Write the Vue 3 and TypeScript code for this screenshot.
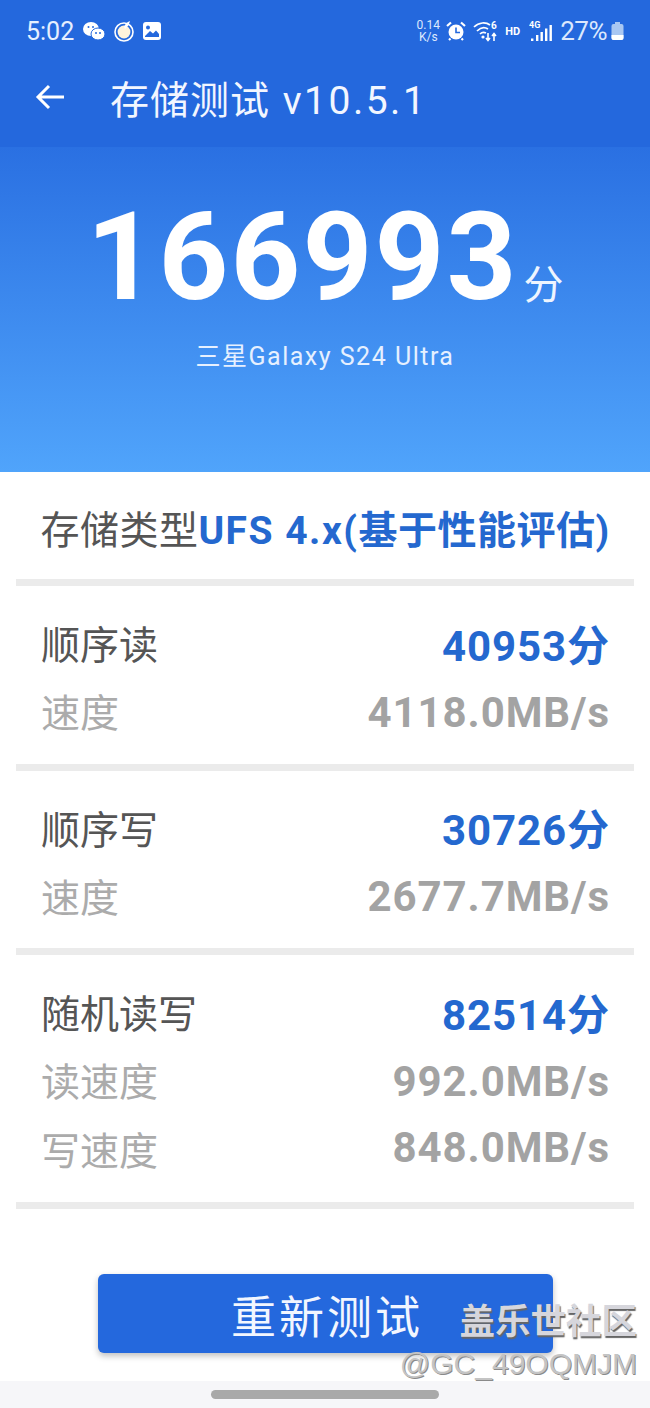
<script setup lang="ts">
interface Line { label: string; value: string; main?: boolean }
const groups: Line[][] = [
  [{ label: '顺序读', value: '40953分', main: true }, { label: '速度', value: '4118.0MB/s' }],
  [{ label: '顺序写', value: '30726分', main: true }, { label: '速度', value: '2677.7MB/s' }],
  [{ label: '随机读写', value: '82514分', main: true }, { label: '读速度', value: '992.0MB/s' }, { label: '写速度', value: '848.0MB/s' }],
]
</script>

<template>
  <div class="page">
    <header class="top">
      <div class="status">
        <div class="status-left">
          <span class="time">5:02</span>
          <svg width="24" height="22" viewBox="0 0 24 22"><ellipse cx="9" cy="9" rx="8" ry="7" fill="#fff" /><ellipse cx="16" cy="14" rx="7" ry="6" fill="#fff" stroke="#2468dd" stroke-width="1" /><circle cx="6.5" cy="7" r="1" fill="#2468dd" /><circle cx="11" cy="7" r="1" fill="#2468dd" /><circle cx="14" cy="13" r="1" fill="#2468dd" /><circle cx="18" cy="13" r="1" fill="#2468dd" /></svg>
          <svg width="22" height="22" viewBox="0 0 22 22"><circle cx="11" cy="12" r="9" fill="none" stroke="#fff" stroke-width="1.6" /><circle cx="11" cy="12" r="6.4" fill="#fff4dc" /><path d="M11 7 C12 4 14 2 17 1 C16 4 15 7 12 9Z" fill="#fff" /></svg>
          <svg width="20" height="20" viewBox="0 0 20 20"><rect x="1" y="1" width="18" height="18" rx="3" fill="#fff" /><circle cx="6" cy="6.5" r="2" fill="#2468dd" /><path d="M3 15 L8 10 L11 12.5 L14 9.5 L17 13 V16 H3Z" fill="#2468dd" /></svg>
        </div>
        <div class="status-right">
          <span class="speed">0.14<br />K/s</span>
          <svg class="alarm" width="20" height="20" viewBox="0 0 20 20"><circle cx="10" cy="11" r="7.5" fill="#fff" /><path d="M10 6.5V11.5H14" fill="none" stroke="#2468dd" stroke-width="1.6" /><path d="M1 5L5 1.5M19 5L15 1.5M4.5 17.5L3 19M15.5 17.5L17 19" stroke="#fff" stroke-width="2.2" /></svg>
          <svg class="wifi" width="26" height="22" viewBox="0 0 26 22"><path d="M1 7C6 2 13 2 17 5M4 11C8 7 12 7 15 9M7 14C9 12 11 12 13 13" fill="none" stroke="#fff" stroke-width="1.7" /><circle cx="10" cy="17" r="1.6" fill="#fff" /><path d="M15 13V20M13 18L15 20.500L17 18M21 21V14M19 16L21 13.500L23 16" fill="none" stroke="#fff" stroke-width="1.6" /><text x="18" y="9" class="wifi-six">6</text></svg>
          <span class="hd">HD</span>
          <svg class="signal" width="24" height="24" viewBox="0 0 24 24"><text x="0" y="9" class="four-g">4G</text><path d="M2 19.500h2.400v2.500H2ZM7 16h2.400v6H7ZM11.500 13h2.400v9h-2.400ZM16 9.500h2.400V22H16ZM20.500 6h2.400v16h-2.400Z" fill="#fff" /></svg>
          <span class="pct">27%</span>
          <svg class="battery" width="13" height="18" viewBox="0 0 13 18"><rect x="4" y="0" width="5" height="2" fill="#a9c7f2" /><rect x="0.500" y="2" width="12" height="16" rx="2" fill="#a9c7f2" /><path d="M0.500 13H12.500V16A2 2 0 0 1 10.500 18H2.500A2 2 0 0 1 0.500 16Z" fill="#fff" /></svg>
        </div>
      </div>
      <div class="bar">
        <svg class="back" width="32" height="32" viewBox="0 0 32 32"><path d="M30 16H4M15 5L4 16L15 27" fill="none" stroke="#fff" stroke-width="3" /></svg>
        <h1 class="title">存储测试 <span class="ver">v10.5.1</span></h1>
      </div>
    </header>

    <section class="hero">
      <div class="score"><span class="num">166993</span><span class="unit">分</span></div>
      <div class="device">三星Galaxy S24 Ultra</div>
    </section>

    <main class="body">
      <div class="type"><span class="type-label">存储类型</span><span class="type-value"><span class="type-latin">UFS 4.x(</span>基于性能评估)</span></div>
      <div class="rule"></div>
      <template v-for="(group, i) in groups" :key="i">
        <div class="group">
          <div v-for="line in group" :key="line.label" class="row" :class="{ main: line.main }">
            <span class="label">{{ line.label }}</span>
            <span class="value">{{ line.value }}</span>
          </div>
        </div>
        <div class="rule"></div>
      </template>
      <div class="action">
        <button class="retest" type="button">重新测试</button>
      </div>
    </main>

    <footer class="nav"><span class="pill"></span></footer>

    <div class="mark">
      <div class="mark-top">盖乐世社区</div>
      <div class="mark-id">@GC_49OQMJM</div>
    </div>
  </div>
</template>

<style>
html, body { margin: 0; padding: 0; background: #fff; }
</style>

<style scoped>
.page {
  position: relative;
  width: 650px;
  height: 1408px;
  overflow: hidden;
  display: flex;
  flex-direction: column;
  background: #fff;
  font-family: Roboto, "Noto Sans CJK SC", sans-serif;
}
.top { height: 147px; flex: none; background: #2468dd; color: #fff; }
.status {
  height: 62px;
  padding: 0 26px 0 26px;
  display: flex;
  justify-content: space-between;
  align-items: center;
  box-sizing: border-box;
}
.status-left { display: flex; align-items: center; gap: 7px; }
.time { font-size: 25px; color: #e6efff; margin-right: 1px; }
.status-right { display: flex; align-items: center; color: #dce8fd; }
.speed { font-size: 12px; line-height: 12px; text-align: center; width: 24px; margin-right: 6px; }
.wifi { margin-left: 7px; }
.wifi-six { font-size: 10px; font-weight: 700; fill: #fff; }
.hd { font-size: 11px; font-weight: 700; margin-left: 6px; color: #fff; }
.signal { margin-left: 9px; }
.four-g { font-size: 9px; font-weight: 700; fill: #fff; }
.pct { font-size: 26px; margin-left: 7px; letter-spacing: -0.5px; }
.battery { margin-left: 4px; }
.bar { height: 78px; display: flex; align-items: center; padding-left: 34px; }
.back { flex: none; margin-top: -8px; }
.title {
  margin: -8px 0 0 44px;
  font-size: 39px;
  font-weight: 400;
  letter-spacing: 1px;
  color: #f2f6ff;
}
.ver { letter-spacing: 2.500px; margin-left: 2px; }
.hero {
  height: 325px;
  flex: none;
  box-sizing: border-box;
  padding-top: 46px;
  background: linear-gradient(#2a70e2, #50a4fb);
  color: #fff;
  text-align: center;
}
.score { display: flex; justify-content: center; align-items: baseline; height: 130px; }
.num { font-size: 122px; line-height: 130px; font-weight: 700; letter-spacing: 2px; }
.unit { font-size: 40px; margin-left: 5px; color: #eef5ff; }
.device { margin-top: 17px; font-size: 25px; line-height: 34px; color: #e6f0ff; letter-spacing: 1.500px; }
.body { flex: 1; padding: 0 16px; }
.type {
  height: 107px;
  box-sizing: border-box;
  padding-top: 3px;
  display: flex;
  align-items: center;
  justify-content: center;
  font-size: 39px;
  letter-spacing: 0.500px;
}
.type-label { color: #555; }
.type-value { color: #2468cf; font-weight: 700; }
.type-latin { letter-spacing: 1.500px; }
.rule { height: 7px; background: #ebebeb; }
.group { padding: 27px 24px 17.500px 25px; display: flex; flex-direction: column; }
.row { display: flex; justify-content: space-between; align-items: center; height: 68px; font-size: 39px; color: #ababab; }
.row .label { padding-bottom: 4px; }
.row.main { height: 58px; margin-bottom: 7px; }
.row.main .label { color: #555; padding-bottom: 0; }
.row.main .value { color: #2468cf; }
.value { font-weight: 700; font-size: 42px; letter-spacing: 0.900px; color: #a3a3a3; }
.row:nth-child(3) { height: 69px; }
.row:nth-child(3) .value { padding-bottom: 4px; }
.action { margin-top: 65px; display: flex; justify-content: center; }
.retest {
  width: 455px;
  height: 79px;
  border: 0;
  border-radius: 6px;
  background: #2468dd;
  color: #f2f6ff;
  font: inherit;
  font-size: 45px;
  letter-spacing: 3px;
  box-shadow: 0 3px 6px rgba(0, 0, 0, 0.25);
  padding: 3px 0 0 4px;
}
.nav {
  height: 27px;
  flex: none;
  background: #f6f6f9;
  display: flex;
  justify-content: center;
  padding-top: 9px;
  box-sizing: border-box;
}
.pill { width: 228px; height: 9px; border-radius: 5px; background: #a9a9a9; }
.mark {
  position: absolute;
  right: 13px;
  top: 1294px;
  text-align: right;
  color: #d6d6dc;
  font-family: "Noto Sans CJK SC", sans-serif;
}
.mark-top {
  font-size: 35.500px;
  line-height: 50px;
  font-weight: 700;
  text-shadow: 1px 2px 1px #666;
}
.mark-id {
  font-family: "Liberation Sans", sans-serif;
  font-size: 30px;
  line-height: 40px;
  color: #c4c4c4;
  text-shadow: 1px 1px 0 #8a8a8a;
}
</style>
